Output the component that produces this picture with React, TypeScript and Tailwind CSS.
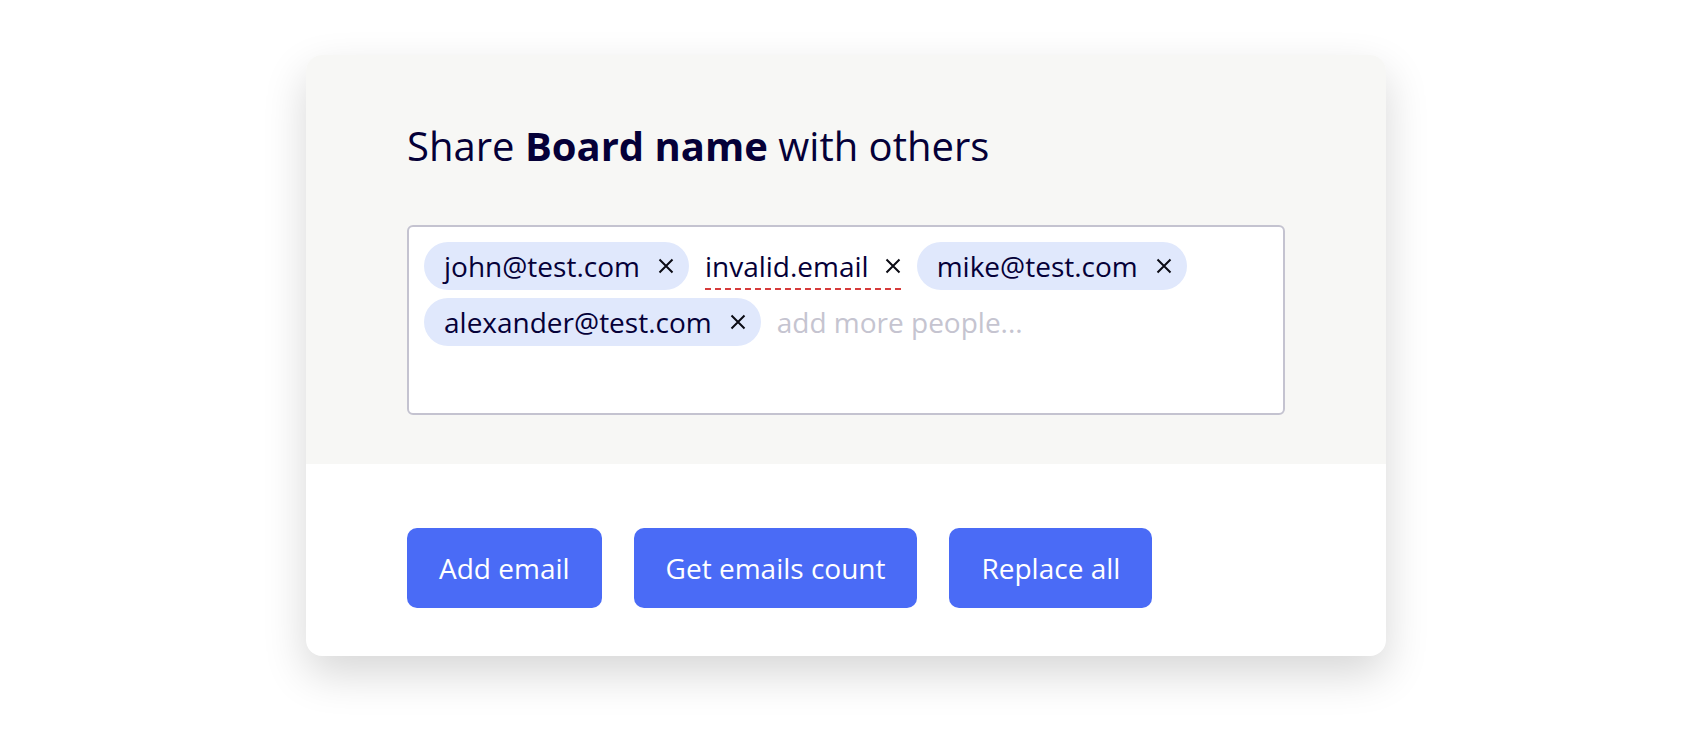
import { useState } from "react";

type Email = {
  value: string;
  valid: boolean;
};

const initialEmails: Email[] = [
  { value: "john@test.com", valid: true },
  { value: "invalid.email", valid: false },
  { value: "mike@test.com", valid: true },
  { value: "alexander@test.com", valid: true },
];

function CloseIcon() {
  return (
    <svg width="16" height="16" viewBox="0 0 16 16" className="shrink-0">
      <path d="M1.5 1.5 L14.5 14.5 M14.5 1.5 L1.5 14.5" stroke="#0b0b14" strokeWidth="2" />
    </svg>
  );
}

function EmailChip({ email, onRemove }: { email: Email; onRemove: () => void }) {
  if (!email.valid) {
    return (
      <div className="h-[48px] flex items-center ml-[8px] mr-[8px]">
        <div className="flex items-center gap-[16px] border-b-2 border-dashed border-[#d63b3b] h-[48px] pt-[1px]">
          <span>{email.value}</span>
          <button type="button" onClick={onRemove} className="flex items-center">
            <CloseIcon />
          </button>
        </div>
      </div>
    );
  }

  return (
    <div className="h-[48px] flex items-center gap-[18px] rounded-full bg-[#e0e8fc] pl-[20px] pr-[15px]">
      <span>{email.value}</span>
      <button type="button" onClick={onRemove} className="flex items-center">
        <CloseIcon />
      </button>
    </div>
  );
}

export default function App() {
  const [emails, setEmails] = useState<Email[]>(initialEmails);
  const [text, setText] = useState("");

  const remove = (i: number) => setEmails(emails.filter((_, idx) => idx !== i));

  return (
    <div
      className="w-full min-h-[734px] bg-white flex justify-center pt-[55px] pr-[12px] text-[#050038]"
      style={{ fontFamily: '"Open Sans", "Noto Sans", sans-serif' }}
    >
      <div className="w-[1080px] h-[601px] rounded-[16px] overflow-hidden bg-white shadow-[0_18px_44px_rgba(0,0,0,0.16)] flex flex-col">
        <div className="bg-[#f7f7f5] h-[409px] px-[101px] pt-[67px]">
          <h1 className="text-[40px] leading-[48px] font-normal">
            Share <b className="font-bold">Board name</b> with others
          </h1>

          <div className="mt-[55px] h-[190px] bg-white border-2 border-[#c4c3d0] rounded-[6px] px-[15px] pt-[15px]">
            <div className="flex flex-wrap gap-[8px] text-[28px] leading-[38px]">
              {emails.map((email, i) => (
                <EmailChip key={email.value + i} email={email} onRemove={() => remove(i)} />
              ))}
              <input
                value={text}
                onChange={(e) => setText(e.target.value)}
                placeholder="add more people..."
                className="h-[48px] flex-1 min-w-[240px] ml-[8px] bg-transparent outline-none placeholder:text-[#c5c4d0] text-[#050038]"
              />
            </div>
          </div>
        </div>

        <div className="flex gap-[32px] px-[101px] pt-[64px]">
          <button type="button" className="h-[80px] px-[32px] rounded-[10px] bg-[#4a6bf6] text-white text-[28px]">
            Add email
          </button>
          <button type="button" className="h-[80px] px-[32px] rounded-[10px] bg-[#4a6bf6] text-white text-[28px]">
            Get emails count
          </button>
          <button type="button" className="h-[80px] px-[32px] rounded-[10px] bg-[#4a6bf6] text-white text-[28px]">
            Replace all
          </button>
        </div>
      </div>
    </div>
  );
}
